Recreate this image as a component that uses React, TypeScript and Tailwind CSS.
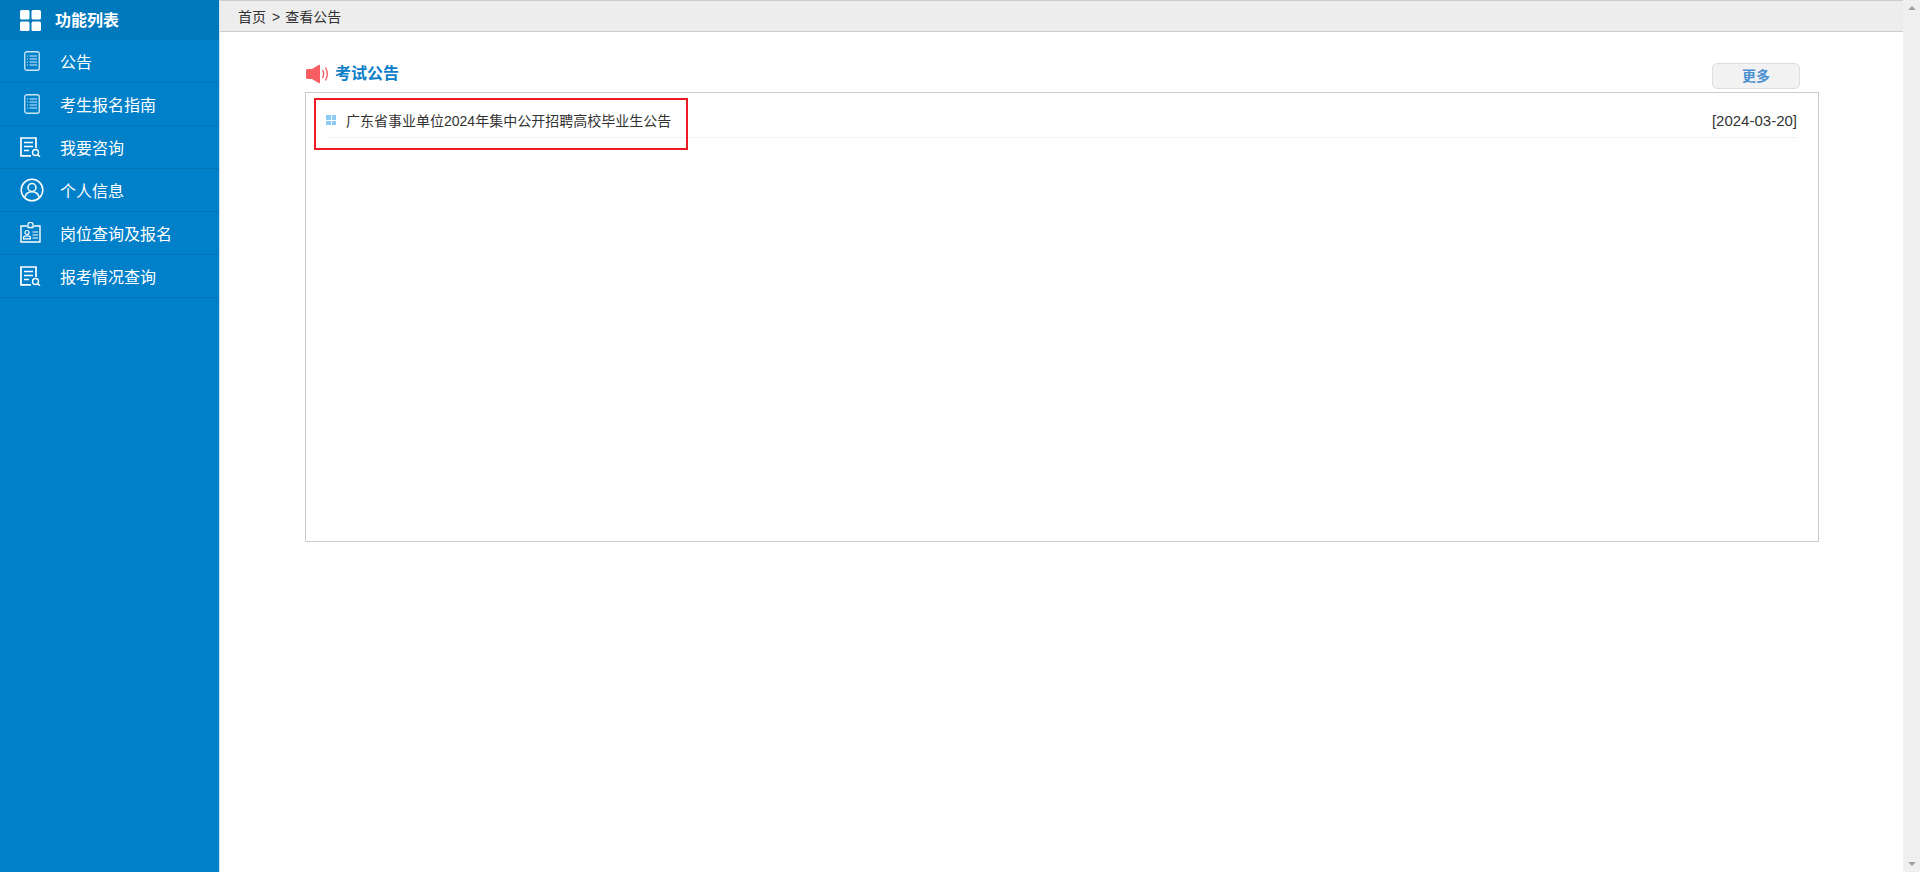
import React from "react";

const DocIcon = () => (
  <svg width="16" height="20" viewBox="0 0 16 20" fill="none" className="ml-[4px] block">
    <rect x="0.75" y="0.75" width="14.5" height="18.5" rx="2" stroke="#cfe6f5" strokeWidth="1.3" />
    <path d="M3 5h1M5.5 5H13M3 8h1M5.5 8H13M3 11h1M5.5 11H13M3 14h1M5.5 14H13" stroke="#cfe6f5" strokeWidth="1.2" />
  </svg>
);

const SearchDocIcon = () => (
  <svg width="21" height="20" viewBox="0 0 21 20" fill="none" className="block">
    <path d="M11 18.9H1V1h15v10" stroke="#fff" strokeWidth="1.7" />
    <path d="M4 5.5h9M4 9.5h9M4 13.5h5" stroke="#fff" strokeWidth="1.6" />
    <circle cx="15.5" cy="15.5" r="3" stroke="#fff" strokeWidth="1.4" />
    <path d="M17.7 17.7l2.3 2.1" stroke="#fff" strokeWidth="1.4" />
  </svg>
);

const UserIcon = () => (
  <svg width="24" height="24" viewBox="0 0 24 24" fill="none" className="block">
    <circle cx="12" cy="12" r="10.8" stroke="#fff" strokeWidth="1.5" />
    <circle cx="12" cy="9.5" r="4" stroke="#fff" strokeWidth="1.5" />
    <path d="M4.8 19.5c.8-3.6 3.6-5.8 7.2-5.8s6.4 2.2 7.2 5.8" stroke="#fff" strokeWidth="1.5" />
  </svg>
);

const BadgeIcon = () => (
  <svg width="21" height="21" viewBox="0 0 21 21" fill="none" className="block">
    <path d="M7 4H1v16h19V4h-6" stroke="#fff" strokeWidth="1.4" />
    <path d="M8 5.5V2.4a2.5 2 0 0 1 5 0v3.1z" stroke="#fff" strokeWidth="1.3" />
    <circle cx="7" cy="10.5" r="2" stroke="#fff" strokeWidth="1.2" />
    <path d="M3.6 16.8v-1.3c0-1 1-1.7 3.4-1.7s3.4.7 3.4 1.7v1.3z" stroke="#fff" strokeWidth="1.2" />
    <path d="M12.5 10h5.5M12.5 13h5.5M12.5 16h5.5" stroke="#fff" strokeWidth="1.2" />
  </svg>
);

const GridIcon = () => (
  <svg width="21" height="21" viewBox="0 0 21 21" fill="#fff" className="block">
    <rect x="0" y="0" width="9.5" height="9.5" rx="1.5" />
    <rect x="11.5" y="0" width="9.5" height="9.5" rx="1.5" />
    <rect x="0" y="11.5" width="9.5" height="9.5" rx="1.5" />
    <rect x="11.5" y="11.5" width="9.5" height="9.5" rx="1.5" />
  </svg>
);

const Speaker = () => (
  <svg width="23" height="20" viewBox="0 0 23 20" fill="none" className="ml-px block">
    <path d="M1.5 5H6L13 .8c.5-.3 1 0 1 .6v17.2c0 .6-.5.9-1 .6L6 15H1.5C.7 15 0 14.3 0 13.5v-7C0 5.700.7 5 1.500 5z" fill="#f65e63" />
    <path d="M16.500 6c1.400 2.400 1.400 5.600 0 8" stroke="#f65e63" strokeWidth="1.4" />
    <path d="M19.500 3.500c2.200 4 2.200 9 0 13" stroke="#f65e63" strokeWidth="1.4" />
  </svg>
);

const items: { label: string; icon: React.ReactNode }[] = [
  { label: "公告", icon: <DocIcon /> },
  { label: "考生报名指南", icon: <DocIcon /> },
  { label: "我要咨询", icon: <SearchDocIcon /> },
  { label: "个人信息", icon: <UserIcon /> },
  { label: "岗位查询及报名", icon: <BadgeIcon /> },
  { label: "报考情况查询", icon: <SearchDocIcon /> },
];

export default function App() {
  return (
    <div className="flex h-[872px] w-[1920px] overflow-hidden bg-white font-['Liberation_Sans','Noto_Sans_CJK_SC',sans-serif] text-[14px] text-[#333]">
      <aside className="w-[219px] shrink-0 bg-[#0080c9] text-white">
        <div className="flex h-10 items-center bg-[#0079bc]">
          <div className="w-[55px] pl-[20px]">
            <GridIcon />
          </div>
          <span className="mt-[2px] text-[16px] font-bold">功能列表</span>
        </div>
        {items.map((it) => (
          <div key={it.label} className="flex h-[43px] items-center border-b border-[#0073b5] pb-px">
            <div className="w-[60px] pl-[20px]">{it.icon}</div>
            <span className="mt-[4px] text-[16px]">{it.label}</span>
          </div>
        ))}
      </aside>
      <div className="w-px shrink-0 bg-[#d4e4ee]" />
      <main className="flex min-w-0 flex-1 flex-col">
        <div className="flex h-8 items-center border-y border-[#ccc] bg-[#ededed] pl-[18px]">
          <span className="mt-[3px]">首页</span>
          <span className="ml-[6px] mr-[5px] mt-[3px]">&gt;</span>
          <span className="mt-[3px]">查看公告</span>
        </div>
        <section className="ml-[85px] mt-[26px] w-[1514px]">
          <div className="flex h-[34px] items-center justify-between">
            <div className="mb-[3px] flex items-center gap-[6px]">
              <Speaker />
              <h2 className="text-[16px] font-bold text-[#0a7ec9]">考试公告</h2>
            </div>
            <button className="mr-[19px] mt-[2px] h-[26px] w-[88px] rounded-[5px] border border-[#dedede] bg-[#f2f2f2] text-[14px] font-bold text-[#4a90d0]">
              更多
            </button>
          </div>
          <div className="h-[450px] border border-[#ccc] pl-[20px] pr-[21px]">
            <div className="flex h-[45px] items-center justify-between border-b border-dotted border-[#e6e6e6] pt-[13px]">
              <div className="flex items-center gap-[10px]">
                <span className="mt-[-3px] grid h-[10px] w-[10px] grid-cols-2 gap-px">
                  <i className="bg-[#8ccbf5]" />
                  <i className="bg-[#8ccbf5]" />
                  <i className="bg-[#8ccbf5]" />
                  <i className="bg-[#8ccbf5]" />
                </span>
                <span>广东省事业单位2024年集中公开招聘高校毕业生公告</span>
              </div>
              <span className="text-[15px]">[2024-03-20]</span>
            </div>
          </div>
        </section>
      </main>
      <div className="flex w-[17px] shrink-0 flex-col items-center justify-between bg-[#f0f0f0] py-[6px]">
        <div className="h-0 w-0 border-x-[4px] border-b-[4px] border-x-transparent border-b-[#a3a3a3]" />
        <div className="h-0 w-0 border-x-[4px] border-t-[4px] border-x-transparent border-t-[#a3a3a3]" />
      </div>
      <div className="pointer-events-none absolute left-[314px] top-[98px] h-[52px] w-[374px] border-2 border-[#ed1c24]" />
    </div>
  );
}
